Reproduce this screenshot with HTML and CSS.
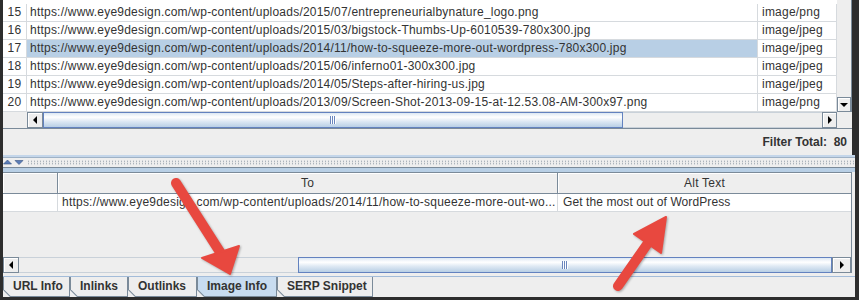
FILE: index.html
```html
<!DOCTYPE html>
<html>
<head>
<meta charset="utf-8">
<title>Image Info</title>
<link rel="stylesheet" href="styles.css">
</head>
<body>
<div class="app">
  <div class="top">
    <div class="view">
      <div class="table">
        <div class="tr"><div class="td num">15</div><div class="td url">https://www.eye9design.com/wp-content/uploads/2015/07/entrepreneurialbynature_logo.png</div><div class="td mime">image/png</div></div>
        <div class="tr"><div class="td num">16</div><div class="td url">https://www.eye9design.com/wp-content/uploads/2015/03/bigstock-Thumbs-Up-6010539-780x300.jpg</div><div class="td mime">image/jpeg</div></div>
        <div class="tr"><div class="td num">17</div><div class="td url sel">https://www.eye9design.com/wp-content/uploads/2014/11/how-to-squeeze-more-out-wordpress-780x300.jpg</div><div class="td mime">image/jpeg</div></div>
        <div class="tr"><div class="td num">18</div><div class="td url">https://www.eye9design.com/wp-content/uploads/2015/06/inferno01-300x300.jpg</div><div class="td mime">image/jpeg</div></div>
        <div class="tr"><div class="td num">19</div><div class="td url">https://www.eye9design.com/wp-content/uploads/2014/05/Steps-after-hiring-us.jpg</div><div class="td mime">image/jpeg</div></div>
        <div class="tr"><div class="td num">20</div><div class="td url">https://www.eye9design.com/wp-content/uploads/2013/09/Screen-Shot-2013-09-15-at-12.53.08-AM-300x97.png</div><div class="td mime">image/png</div></div>
      </div>
      <div class="vscroll">
        <div class="vtrack"></div>
        <div class="btn vbtn"><span class="arr arr-down"></span></div>
      </div>
    </div>
    <div class="hrow">
      <div class="corner-l"></div>
      <div class="hscroll hs-top">
        <div class="btn hbtn"><span class="arr arr-left"></span></div>
        <div class="thumb thumb-top"><span class="grip"></span></div>
        <div class="track track-top"></div>
        <div class="btn hbtn hbtn-r1"><span class="arr arr-right"></span></div>
      </div>
      <div class="corner-r"></div>
    </div>
    <div class="filter"><b>Filter Total:  80</b></div>
  </div>

  <div class="splitter">
    <div class="s-blue"></div>
    <div class="s-line"></div>
    <div class="bumps">
      <svg class="onetouch" width="22" height="9" viewBox="0 0 22 9">
        <polygon points="0.5,6 4.5,2 8.5,6" fill="#5b7db8" stroke="#34507f" stroke-width="0.6"/>
        <polygon points="12,2.5 20,2.5 16,6.5" fill="#5b7db8" stroke="#34507f" stroke-width="0.6"/>
      </svg>
      <div class="dots"></div>
    </div>
    <div class="s-dark"></div>
    <div class="s-band"></div>
  </div>

  <div class="bottom">
    <div class="pane">
      <div class="thead">
        <div class="th c1"></div>
        <div class="th c2">To</div>
        <div class="th c3">Alt Text</div>
      </div>
      <div class="tr2">
        <div class="td2 c1"></div>
        <div class="td2 c2">https://www.eye9design.com/wp-content/uploads/2014/11/how-to-squeeze-more-out-wo...</div>
        <div class="td2 c3">Get the most out of WordPress</div>
      </div>
      <div class="empty"></div>
      <div class="hscroll hs-bottom">
        <div class="btn hbtn"><span class="arr arr-left"></span></div>
        <div class="track track-bottom"></div>
        <div class="thumb thumb-bottom"><span class="grip"></span></div>
        <div class="btn hbtn hbtn-r2"><span class="arr arr-right"></span></div>
      </div>
    </div>
    <div class="gap"></div>
    <div class="tabs">
      <div class="tab t1"><span>URL Info</span></div>
      <div class="tab t2"><span>Inlinks</span></div>
      <div class="tab t3"><span>Outlinks</span></div>
      <div class="tab t4 active"><span>Image Info</span></div>
      <div class="tab t5"><span>SERP Snippet</span></div>
    </div>
  </div>
</div>

<svg class="arrows" width="859" height="300" viewBox="0 0 859 300">
  <g class="arrow-g" fill="#e8483f" stroke="#e8483f">
    <line x1="176" y1="183" x2="220" y2="252" stroke-width="10" stroke-linecap="round"/>
    <polygon points="202,258 239,246 230,274" stroke-width="2" stroke-linejoin="round"/>
    <line x1="618" y1="286" x2="648" y2="243" stroke-width="10" stroke-linecap="round"/>
    <polygon points="634,234 661,253 666,217" stroke-width="2" stroke-linejoin="round"/>
  </g>
</svg>
</body>
</html>
```

FILE: styles.css
```css
* {
  box-sizing: border-box;
  margin: 0;
  padding: 0;
}

html, body {
  width: 859px;
  height: 300px;
  overflow: hidden;
}

body {
  background: #2d2d2d;
  font-family: "Liberation Sans", Arial, sans-serif;
  font-size: 12px;
  color: #333333;
  position: relative;
}

.app {
  margin-left: 3px;
  width: 852px;
  height: 297px;
  display: flex;
  flex-direction: column;
}

/* ---------- top pane ---------- */
.top {
  width: 849px;
  background: #eeeeee;
}

.view {
  display: flex;
  height: 112px;
  border-right: 1px solid #7a8a99;
}

.table {
  width: 834px;
  background: #ffffff;
  padding-top: 4px;
}

.tr {
  display: flex;
  height: 18px;
  border-bottom: 1px solid #d6dade;
}

.td {
  height: 17px;
  line-height: 17px;
  border-right: 1px solid #d6dade;
  white-space: nowrap;
  overflow: hidden;
  padding-left: 3px;
  letter-spacing: 0.22px;
}

.num {
  width: 24px;
  padding-left: 0;
  text-align: center;
}

.url {
  width: 731px;
}

.mime {
  width: 79px;
  padding-left: 4px;
}

.sel {
  background: #b8cfe5;
}

.vscroll {
  width: 14px;
  display: flex;
  flex-direction: column;
  background: #eeeeee;
}

.vtrack {
  flex: 1;
}

/* buttons & arrows */
.btn {
  flex: none;
  background: #eeeeee;
  border: 1px solid #7a8a99;
  box-shadow: inset 1px 1px 0 #ffffff;
  display: flex;
  align-items: center;
  justify-content: center;
}

.vbtn {
  height: 15px;
}

.hbtn {
  width: 16px;
  height: 16px;
}

.hbtn-r1 {
  width: 15px;
}

.hbtn-r2 {
  width: 19px;
}

.arr {
  display: block;
  width: 0;
  height: 0;
  border-style: solid;
}

.arr-left {
  border-width: 4px 4px 4px 0;
  border-color: transparent #000000 transparent transparent;
}

.arr-right {
  border-width: 4px 0 4px 4px;
  border-color: transparent transparent transparent #000000;
}

.arr-down {
  border-width: 4px 4px 0 4px;
  border-color: #000000 transparent transparent transparent;
}

.hrow {
  display: flex;
  height: 17px;
  border-bottom: 1px solid #7a8a99;
}

.corner-l {
  width: 24px;
  background: #eeeeee;
}

.corner-r {
  width: 15px;
  background: #eeeeee;
}

.hscroll {
  display: flex;
  height: 16px;
}

.hs-top {
  width: 810px;
}

.track {
  background: #eeeeee;
  border-top: 1px solid #c9d1d9;
  border-bottom: 1px solid #c9d1d9;
}

.track-top {
  width: 199px;
}

.track-bottom {
  width: 279px;
}

.thumb {
  border: 1px solid #6382bf;
  background: linear-gradient(to bottom, #dde8f3 0%, #ffffff 30%, #dde8f3 60%, #b8cfe5 100%);
  display: flex;
  align-items: center;
  justify-content: center;
}

.thumb-top {
  width: 580px;
}

.thumb-bottom {
  width: 534px;
}

.grip {
  width: 6px;
  height: 8px;
  background: repeating-linear-gradient(to right, #6a86bd 0 1px, #ffffff 1px 2px);
}

.filter {
  height: 26px;
  display: flex;
  align-items: center;
  justify-content: flex-end;
  padding-right: 5px;
  white-space: pre;
}

/* ---------- splitter ---------- */
.splitter {
  width: 852px;
  background: #eeeeee;
  display: flex;
  flex-direction: column;
}

.s-blue {
  height: 2px;
  background: #c4d6ea;
}

.s-line {
  height: 1px;
  background: #9fb2c6;
}

.bumps {
  height: 9px;
  display: flex;
  align-items: center;
}

.onetouch {
  flex: none;
  display: block;
}

.dots {
  flex: 1;
  height: 5px;
  margin-left: 2px;
  background-image: radial-gradient(circle, #98a2ac 0.6px, transparent 0.9px);
  background-size: 3px 2.5px;
}

.s-dark {
  height: 1px;
  background: #7a8a99;
}

.s-band {
  height: 4px;
  background: #b8cfe5;
}

/* ---------- bottom pane ---------- */
.bottom {
  width: 852px;
  background: #eeeeee;
  display: flex;
  flex-direction: column;
  flex: 1;
}

.pane {
  width: 849px;
  border-top: 1px solid #7a8a99;
  border-right: 1px solid #7a8a99;
  background: #eeeeee;
}

.thead {
  display: flex;
  height: 21px;
  border-bottom: 1px solid #7a8a99;
}

.th {
  height: 20px;
  line-height: 20px;
  text-align: center;
  border-right: 1px solid #7a8a99;
  box-shadow: inset 1px 1px 0 #ffffff;
  white-space: nowrap;
  letter-spacing: 0.22px;
}

.c1 {
  width: 55px;
}

.c2 {
  width: 500px;
}

.c3 {
  width: 293px;
}

.th.c3 {
  border-right: none;
}

.tr2 {
  display: flex;
  height: 18px;
  border-bottom: 1px solid #d6dade;
  background: #ffffff;
}

.td2 {
  height: 17px;
  line-height: 17px;
  border-right: 1px solid #d6dade;
  padding-left: 4px;
  white-space: nowrap;
  overflow: hidden;
  letter-spacing: 0.22px;
}

.td2.c3 {
  border-right: none;
  padding-left: 5px;
  letter-spacing: 0.1px;
}

.empty {
  height: 45px;
}

.hs-bottom {
  width: 848px;
}

.gap {
  height: 3px;
}

/* ---------- tabs ---------- */
.tabs {
  display: flex;
  height: 21px;
  border-top: 1px solid #a3bcd9;
}

.tab {
  height: 20px;
  background: #7a8a99;
  padding: 0 1px 1px 1px;
  clip-path: polygon(0 0, 100% 0, 100% 100%, 7px 100%, 0 calc(100% - 7px));
}

.tab span {
  display: block;
  height: 100%;
  background: #eeeeee;
  clip-path: polygon(0 0, 100% 0, 100% 100%, 6.5px 100%, 0 calc(100% - 6.5px));
  font-weight: bold;
  line-height: 19px;
  padding-left: 9px;
  white-space: nowrap;
}

.tab.active span {
  background: #c8dcf0;
}

.t1 { width: 67px; }
.t2 { width: 58px; }
.t3 { width: 69px; }
.t4 { width: 80px; }
.t5 { width: 96px; }

/* ---------- red annotation arrows (overlay) ---------- */
.arrows {
  position: absolute;
  left: 0;
  top: 0;
  pointer-events: none;
}

.arrow-g {
  filter: drop-shadow(1px 1px 1px rgba(0, 0, 0, 0.3));
}
```
